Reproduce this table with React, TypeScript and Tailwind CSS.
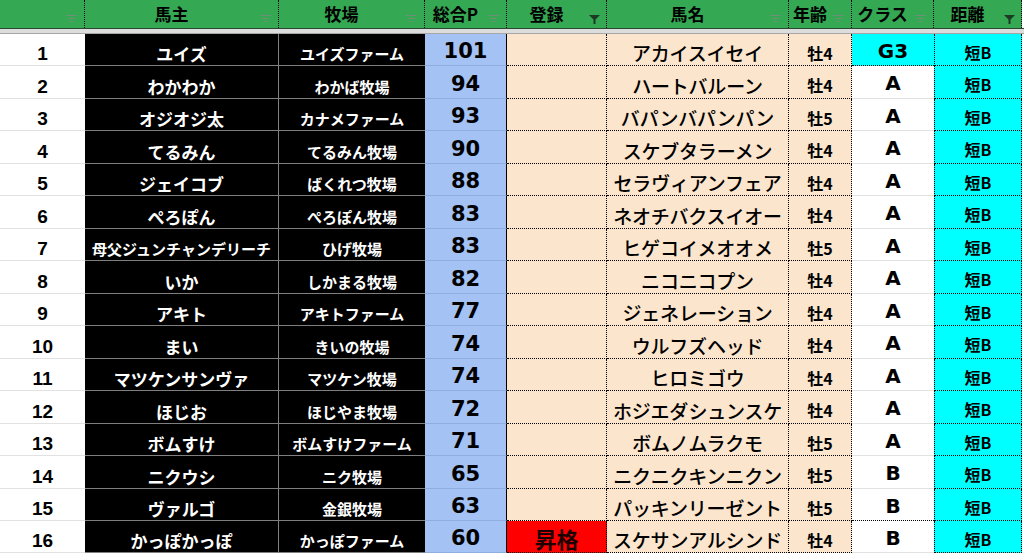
import React from 'react';

type Row = {
  no: number;
  owner: string;
  farm: string;
  point: number;
  entry?: string;
  horse: string;
  age: string;
  cls: string;
  dist: string;
};

const rows: Row[] = [
  { no: 1, owner: 'ユイズ', farm: 'ユイズファーム', point: 101, horse: 'アカイスイセイ', age: '牡4', cls: 'G3', dist: '短B' },
  { no: 2, owner: 'わかわか', farm: 'わかば牧場', point: 94, horse: 'ハートバルーン', age: '牡4', cls: 'A', dist: '短B' },
  { no: 3, owner: 'オジオジ太', farm: 'カナメファーム', point: 93, horse: 'バパンバパンパン', age: '牡5', cls: 'A', dist: '短B' },
  { no: 4, owner: 'てるみん', farm: 'てるみん牧場', point: 90, horse: 'スケブタラーメン', age: '牡4', cls: 'A', dist: '短B' },
  { no: 5, owner: 'ジェイコブ', farm: 'ばくれつ牧場', point: 88, horse: 'セラヴィアンフェア', age: '牡4', cls: 'A', dist: '短B' },
  { no: 6, owner: 'ぺろぽん', farm: 'ぺろぽん牧場', point: 83, horse: 'ネオチバクスイオー', age: '牡4', cls: 'A', dist: '短B' },
  { no: 7, owner: '母父ジュンチャンデリーチ', farm: 'ひげ牧場', point: 83, horse: 'ヒゲコイメオオメ', age: '牡5', cls: 'A', dist: '短B' },
  { no: 8, owner: 'いか', farm: 'しかまる牧場', point: 82, horse: 'ニコニコプン', age: '牡4', cls: 'A', dist: '短B' },
  { no: 9, owner: 'アキト', farm: 'アキトファーム', point: 77, horse: 'ジェネレーション', age: '牡4', cls: 'A', dist: '短B' },
  { no: 10, owner: 'まい', farm: 'きいの牧場', point: 74, horse: 'ウルフズヘッド', age: '牡4', cls: 'A', dist: '短B' },
  { no: 11, owner: 'マツケンサンヴァ', farm: 'マツケン牧場', point: 74, horse: 'ヒロミゴウ', age: '牡4', cls: 'A', dist: '短B' },
  { no: 12, owner: 'ほじお', farm: 'ほじやま牧場', point: 72, horse: 'ホジエダシュンスケ', age: '牡4', cls: 'A', dist: '短B' },
  { no: 13, owner: 'ボムすけ', farm: 'ボムすけファーム', point: 71, horse: 'ボムノムラクモ', age: '牡5', cls: 'A', dist: '短B' },
  { no: 14, owner: 'ニクウシ', farm: 'ニク牧場', point: 65, horse: 'ニクニクキンニクン', age: '牡5', cls: 'B', dist: '短B' },
  { no: 15, owner: 'ヴァルゴ', farm: '金銀牧場', point: 63, horse: 'パッキンリーゼント', age: '牡5', cls: 'B', dist: '短B' },
  { no: 16, owner: 'かっぽかっぽ', farm: 'かっぽファーム', point: 60, entry: '昇格', horse: 'スケサンアルシンド', age: '牡4', cls: 'B', dist: '短B' },
];

const jp = "font-['Noto_Sans_CJK_JP',sans-serif]";
const num = "font-['DejaVu_Sans','Noto_Sans_CJK_JP',sans-serif]";

const SortIcon = () => (
  <svg width="11" height="7" viewBox="0 0 11 7" className="absolute right-[7px] top-[15px]">
    <rect x="0" y="0" width="11" height="1" fill="#6f8f76" />
    <rect x="2" y="3" width="7" height="1" fill="#6f8f76" />
    <rect x="4" y="6" width="3" height="1" fill="#6f8f76" />
  </svg>
);

const FunnelIcon = () => (
  <svg width="11" height="9" viewBox="0 0 11 9" className="absolute right-[6px] top-[15px]">
    <path d="M0 0 H11 L6.5 4.5 V9 H4.5 V4.5 Z" fill="#1d3a24" />
  </svg>
);

const headers: { label: string; w: string; filter?: boolean }[] = [
  { label: '', w: 'w-[85px]' },
  { label: '馬主', w: 'w-[194px]' },
  { label: '牧場', w: 'w-[146px]' },
  { label: '総合P', w: 'w-[82px]' },
  { label: '登録', w: 'w-[100px]', filter: true },
  { label: '馬名', w: 'w-[182px]' },
  { label: '年齢', w: 'w-[63px]' },
  { label: 'クラス', w: 'w-[82px]' },
  { label: '距離', w: 'w-[88px]', filter: true },
];

export default function App() {
  return (
    <div className={`w-[1024px] h-[553px] overflow-hidden bg-white ${jp}`}>
      {/* header */}
      <div className="flex h-[29px] bg-[#34a853] border-b border-[#2b4a33]">
        {headers.map((h, i) => (
          <div
            key={i}
            className={`relative ${h.w} h-full flex items-center justify-center pr-[20px] pb-[1px] border-r border-dotted border-black text-[17px] font-bold text-black leading-none`}
          >
            {h.label}
            {h.filter ? <FunnelIcon /> : <SortIcon />}
          </div>
        ))}
        <div className="w-[2px] h-full bg-white" />
      </div>
      <div className="h-[5px] bg-[#dcdcdc] border-b border-[#a6a6a6]" />

      {/* rows */}
      {rows.map((r, i) => {
        const h = i % 2 === 0 || i === 15 ? 'h-[32px]' : 'h-[33px]';
        const clsCyan = r.cls === 'G3';
        const clsBottom = clsCyan || i === 14 ? 'border-dotted border-black' : 'border-solid border-[#e2e2e2]';
        return (
          <div key={r.no} className={`flex ${h}`}>
            <div className="w-[85px] h-full flex items-center justify-center pt-[8px] leading-none border-b border-[#e2e2e2] font-['Liberation_Sans',sans-serif] font-bold text-[19px] text-black">
              {r.no}
            </div>
            <div
              className={`w-[194px] h-full flex items-center justify-center pt-[8px] leading-none bg-black border-b border-r border-[#7f7f7f] text-white font-bold whitespace-nowrap ${
                r.owner.length > 10 ? 'text-[15px]' : 'text-[17px]'
              }`}
            >
              {r.owner}
            </div>
            <div className="w-[146px] h-full flex items-center justify-center pt-[8px] leading-none bg-black border-b border-[#7f7f7f] text-white font-bold text-[15px] whitespace-nowrap">
              {r.farm}
            </div>
            <div className={`w-[82px] h-full flex items-center justify-center pt-[4px] leading-none bg-[#a4c2f4] border-b border-[#8faedf] border-r border-r-black border-r-dotted ${num} font-bold text-[21px] text-black`}>
              {r.point}
            </div>
            <div
              className={`w-[100px] h-full flex items-center justify-center pt-[2px] leading-none border-b border-r border-dotted border-black font-bold text-[22px] text-[#1a0000] ${
                r.entry ? 'bg-[#ff0000]' : 'bg-[#fce5cd]'
              }`}
            >
              {r.entry}
            </div>
            <div className="w-[182px] h-full flex items-center justify-center pt-[6px] leading-none bg-[#fce5cd] border-b border-r border-dotted border-black text-[19px] font-medium text-black whitespace-nowrap tracking-[-0.2px]">
              {r.horse}
            </div>
            <div className="w-[63px] h-full flex items-center justify-center pt-[6px] leading-none bg-[#fce5cd] border-b border-r border-dotted border-black text-[16px] font-bold text-black">
              {r.age}
            </div>
            <div
              className={`w-[82px] h-full flex items-center justify-center pt-[2px] leading-none border-b ${clsBottom} ${num} font-bold text-[20px] text-black ${
                clsCyan ? 'bg-[#00ffff]' : 'bg-white'
              }`}
            >
              {r.cls}
            </div>
            <div className="w-[88px] h-full flex items-center justify-center pt-[4px] leading-none bg-[#00ffff] border-b border-r border-l border-dotted border-black text-[16px] font-bold text-black">
              {r.dist}
            </div>
            <div className="w-[2px] h-full bg-white" />
          </div>
        );
      })}
    </div>
  );
}
